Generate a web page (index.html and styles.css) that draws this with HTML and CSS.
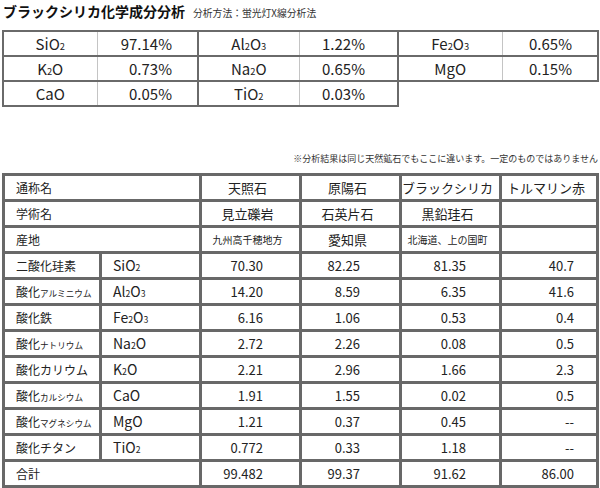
FILE: index.html
```html
<!DOCTYPE html>
<html lang="ja">
<head>
<meta charset="utf-8">
<title>ブラックシリカ化学成分分析</title>
<link rel="stylesheet" href="styles.css">
</head>
<body>
<div class="page">
  <h1 class="title">ブラックシリカ化学成分分析<span class="method">分析方法：蛍光灯X線分析法</span></h1>

  <table class="summary">
    <colgroup>
      <col class="c1"><col class="c2"><col class="c3"><col class="c4"><col class="c5"><col class="c6">
    </colgroup>
    <tr>
      <td class="nm">SiO<span class="sub">2</span></td><td class="val v1">97.14%</td>
      <td class="nm">Al<span class="sub">2</span>O<span class="sub">3</span></td><td class="val v2">1.22%</td>
      <td class="nm">Fe<span class="sub">2</span>O<span class="sub">3</span></td><td class="val v3">0.65%</td>
    </tr>
    <tr>
      <td class="nm">K<span class="sub">2</span>O</td><td class="val v1">0.73%</td>
      <td class="nm">Na<span class="sub">2</span>O</td><td class="val v2">0.65%</td>
      <td class="nm">MgO</td><td class="val v3">0.15%</td>
    </tr>
    <tr>
      <td class="nm">CaO</td><td class="val v1">0.05%</td>
      <td class="nm">TiO<span class="sub">2</span></td><td class="val v2">0.03%</td>
      <td class="blank"></td><td class="blank"></td>
    </tr>
  </table>

  <p class="note">※分析結果は同じ天然鉱石でもここに違います。一定のものではありません</p>

  <table class="detail">
    <colgroup>
      <col class="d1"><col class="d2"><col class="d3"><col class="d4"><col class="d5"><col class="d6">
    </colgroup>
    <tr>
      <td class="lbl" colspan="2">通称名</td>
      <td class="ctr">天照石</td><td class="ctr">原陽石</td><td class="ctr">ブラックシリカ</td><td class="ctr">トルマリン赤</td>
    </tr>
    <tr>
      <td class="lbl" colspan="2">学術名</td>
      <td class="ctr">見立礫岩</td><td class="ctr">石英片石</td><td class="ctr">黒鉛珪石</td><td class="ctr"></td>
    </tr>
    <tr>
      <td class="lbl" colspan="2">産地</td>
      <td class="ctr sm">九州高千穂地方</td><td class="ctr">愛知県</td><td class="ctr sm">北海道、上の国町</td><td class="ctr"></td>
    </tr>
    <tr>
      <td class="lbl">二酸化珪素</td><td class="fm">SiO<span class="sub">2</span></td>
      <td class="n n3">70.30</td><td class="n n4">82.25</td><td class="n n5">81.35</td><td class="n n6">40.7</td>
    </tr>
    <tr>
      <td class="lbl">酸化<span class="kana">アルミニウム</span></td><td class="fm">Al<span class="sub">2</span>O<span class="sub">3</span></td>
      <td class="n n3">14.20</td><td class="n n4">8.59</td><td class="n n5">6.35</td><td class="n n6">41.6</td>
    </tr>
    <tr>
      <td class="lbl">酸化鉄</td><td class="fm">Fe<span class="sub">2</span>O<span class="sub">3</span></td>
      <td class="n n3">6.16</td><td class="n n4">1.06</td><td class="n n5">0.53</td><td class="n n6">0.4</td>
    </tr>
    <tr>
      <td class="lbl">酸化<span class="kana">ナトリウム</span></td><td class="fm">Na<span class="sub">2</span>O</td>
      <td class="n n3">2.72</td><td class="n n4">2.26</td><td class="n n5">0.08</td><td class="n n6">0.5</td>
    </tr>
    <tr>
      <td class="lbl">酸化カリウム</td><td class="fm">K<span class="sub">2</span>O</td>
      <td class="n n3">2.21</td><td class="n n4">2.96</td><td class="n n5">1.66</td><td class="n n6">2.3</td>
    </tr>
    <tr>
      <td class="lbl">酸化<span class="kana">カルシウム</span></td><td class="fm">CaO</td>
      <td class="n n3">1.91</td><td class="n n4">1.55</td><td class="n n5">0.02</td><td class="n n6">0.5</td>
    </tr>
    <tr>
      <td class="lbl">酸化<span class="kana">マグネシウム</span></td><td class="fm">MgO</td>
      <td class="n n3">1.21</td><td class="n n4">0.37</td><td class="n n5">0.45</td><td class="n n6">--</td>
    </tr>
    <tr>
      <td class="lbl">酸化チタン</td><td class="fm">TiO<span class="sub">2</span></td>
      <td class="n n3">0.772</td><td class="n n4">0.33</td><td class="n n5">1.18</td><td class="n n6">--</td>
    </tr>
    <tr>
      <td class="lbl" colspan="2">合計</td>
      <td class="n n3">99.482</td><td class="n n4">99.37</td><td class="n n5">91.62</td><td class="n n6">86.00</td>
    </tr>
  </table>
</div>
</body>
</html>
```

FILE: styles.css
```css
html, body {
  margin: 0;
  padding: 0;
  background: #ffffff;
}

body {
  font-family: "Noto Sans CJK JP", "Noto Sans", sans-serif;
  color: #222222;
}

.page {
  width: 600px;
  height: 488px;
  overflow: hidden;
  padding: 1px 2px 0 2px;
  box-sizing: border-box;
}

.title {
  margin: 0 0 0 1px;
  font-size: 14px;
  font-weight: 700;
  line-height: 20px;
  height: 20px;
  color: #111111;
}

.method {
  margin-left: 8px;
  font-size: 9.8px;
  font-weight: 400;
  color: #333333;
}

/* ---- summary table ---- */
.summary {
  margin-top: 9px;
  border-collapse: collapse;
  table-layout: fixed;
  width: 597px;
}

.summary .c1 { width: 94px; }
.summary .c2 { width: 101px; }
.summary .c3 { width: 101px; }
.summary .c4 { width: 99px; }
.summary .c5 { width: 104px; }
.summary .c6 { width: 96px; }

.summary td {
  padding: 0;
  font-size: 15px;
  line-height: 23px;
  border: 2px solid #6a6a6a;
  white-space: nowrap;
}

.summary .nm {
  text-align: center;
  border-right: 1px solid #c4c4c4;
}

.summary .val {
  text-align: right;
  border-left: 1px solid #c4c4c4;
}

.summary .v1 { padding-right: 25px; }
.summary .v2 { padding-right: 32px; }
.summary .v3 { padding-right: 25px; }

.summary td.blank {
  border: none;
}

.sub {
  font-size: 0.62em;
  line-height: 0;
}

/* ---- note ---- */
.note {
  margin: 46px 0 0 0;
  font-size: 9px;
  line-height: 12px;
  text-align: right;
  color: #333333;
}

/* ---- detail table ---- */
.detail {
  margin-top: 8px;
  border-collapse: collapse;
  table-layout: fixed;
  width: 597px;
}

.detail .d1 { width: 97px; }
.detail .d2 { width: 100px; }
.detail .d3 { width: 100px; }
.detail .d4 { width: 100px; }
.detail .d5 { width: 100px; }
.detail .d6 { width: 97px; }

.detail td {
  padding: 0;
  border: 3px solid #686868;
  font-size: 13px;
  line-height: 23px;
  white-space: nowrap;
}

.detail .lbl {
  padding-left: 11px;
  font-size: 12px;
}

.detail .kana {
  font-size: 8.6px;
  line-height: 0;
}

.detail .fm {
  padding-left: 11px;
  font-size: 14px;
}

.detail .ctr {
  text-align: center;
  padding-right: 6px;
}

.detail .ctr.sm {
  font-size: 10px;
}

.detail .n {
  text-align: right;
}

.detail .n3 { padding-right: 36px; }
.detail .n4 { padding-right: 39px; }
.detail .n5 { padding-right: 33px; }
.detail .n6 { padding-right: 22px; }
```
